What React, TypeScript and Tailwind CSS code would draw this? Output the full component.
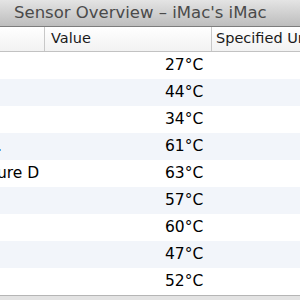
const rows = [
  { name: "", value: "27°C" },
  { name: "", value: "44°C" },
  { name: "", value: "34°C" },
  { name: ".", value: "61°C" },
  { name: "ure D", value: "63°C" },
  { name: "", value: "57°C" },
  { name: "", value: "60°C" },
  { name: "", value: "47°C" },
  { name: "", value: "52°C" },
];

export default function App() {
  return (
    <div className="flex h-[300px] w-[300px] flex-col overflow-hidden bg-white font-['DejaVu_Sans',sans-serif]">
      <div className="flex h-[27px] shrink-0 items-center whitespace-nowrap border-b border-[#7d7d7d] bg-gradient-to-b from-[#e4e4e4] to-[#bdbdbd] pl-[14px] text-[16.5px] text-[#4a4a4a]">
        Sensor Overview – iMac's iMac
      </div>
      <div className="flex h-[25px] shrink-0 items-center whitespace-nowrap border-b border-[#c2c2c2] bg-gradient-to-b from-white to-[#f2f2f2] text-[14.5px] text-[#1a1a1a]">
        <div className="h-full w-[45px] shrink-0 border-r border-[#c8c8c8]" />
        <div className="flex h-full w-[167px] shrink-0 items-center border-r border-[#c8c8c8] pl-[6px]">
          Value
        </div>
        <div className="pl-[4px]">Specified Units</div>
      </div>
      <div className="flex flex-col">
        {rows.map((r, i) => (
          <div
            key={i}
            className={
              "flex h-[27px] items-center whitespace-nowrap text-[15.5px] text-black " +
              (i % 2 === 1 ? "bg-[#f2f5fa]" : "bg-white")
            }
          >
            <div className="w-[165px] shrink-0 overflow-hidden">
              <span className="-ml-[3px]">{r.name}</span>
            </div>
            <div>{r.value}</div>
          </div>
        ))}
      </div>
      <div className="flex-1 border-t border-[#b5b5b5] bg-[#e3e3e3]" />
    </div>
  );
}
